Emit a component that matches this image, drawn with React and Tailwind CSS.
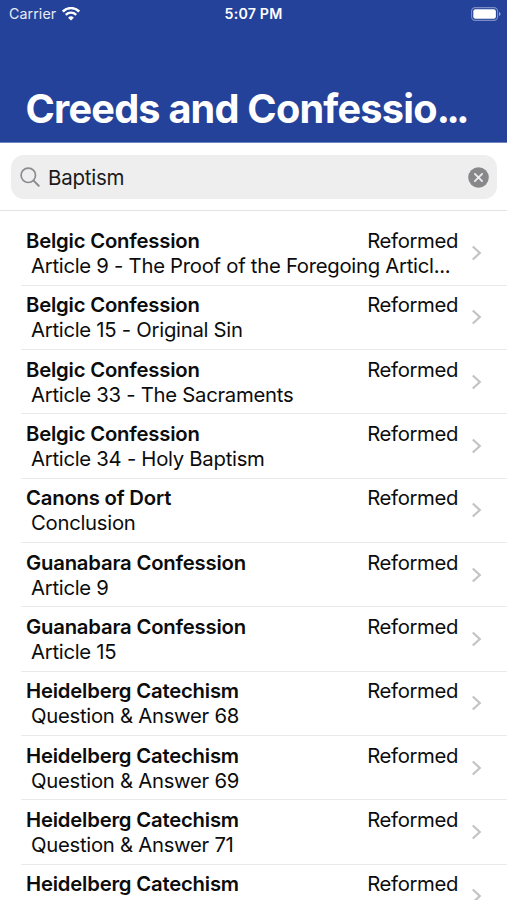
const results = [
  { source: "Belgic Confession", title: "Article 9 - The Proof of the Foregoing Articl..." },
  { source: "Belgic Confession", title: "Article 15 - Original Sin" },
  { source: "Belgic Confession", title: "Article 33 - The Sacraments" },
  { source: "Belgic Confession", title: "Article 34 - Holy Baptism" },
  { source: "Canons of Dort", title: "Conclusion" },
  { source: "Guanabara Confession", title: "Article 9" },
  { source: "Guanabara Confession", title: "Article 15" },
  { source: "Heidelberg Catechism", title: "Question & Answer 68" },
  { source: "Heidelberg Catechism", title: "Question & Answer 69" },
  { source: "Heidelberg Catechism", title: "Question & Answer 71" },
  { source: "Heidelberg Catechism", title: "" },
];

const WifiIcon = () => (
  <svg width="18" height="14" viewBox="0 0 18 14" fill="none" stroke="white">
    <path d="M.8 4.500a11.600 11.600 0 0 1 16.400 0" strokeWidth="2.500" />
    <path d="M3.800 7.800a7.400 7.400 0 0 1 10.400 0" strokeWidth="2.400" />
    <path d="M9 13.600 6.100 10.700a4.100 4.100 0 0 1 5.800 0Z" fill="white" stroke="none" />
  </svg>
);

const BatteryIcon = () => (
  <svg width="30" height="14" viewBox="0 0 30 14" fill="none">
    <rect x="0.6" y="0.6" width="26" height="12.8" rx="3.6" stroke="white" strokeOpacity="0.4" strokeWidth="1.1" />
    <rect x="2.3" y="2.3" width="22.6" height="9.4" rx="2.2" fill="white" />
    <path d="M28 5v4c.9-.3 1.5-1.1 1.5-2S28.900 5.300 28 5Z" fill="white" fillOpacity="0.5" />
  </svg>
);

const StatusBar = () => (
  <div className="grid grid-cols-3 items-center h-[27px] pl-[9px] pr-[6px] text-[14.200px] leading-[27px]">
    <div className="flex items-center gap-[6px]">
      <span className="tracking-[0.1px] text-white/90">Carrier</span>
      <WifiIcon />
    </div>
    <span className="text-center font-semibold whitespace-nowrap tracking-[0.2px] pr-[3px]">5:07 PM</span>
    <div className="flex justify-end">
      <BatteryIcon />
    </div>
  </div>
);

const SearchField = () => (
  <div className="h-[68px] shrink-0 pl-[11px] pr-[10px] pt-[12px] border-b border-[#e3e3e4]">
    <div className="flex items-center h-[44px] rounded-[13px] bg-[#eeeeef] pl-[9px] pr-[8px]">
      <svg width="21" height="21" viewBox="0 0 21 21" fill="none" stroke="#8c8c90" strokeWidth="1.7" strokeLinecap="round">
        <circle cx="8.300" cy="8.300" r="7.200" />
        <path d="m13.600 13.600 5.100 5.100" strokeWidth="2" />
      </svg>
      <span className="flex-1 pl-[7px] pt-[2px] text-[20.500px] tracking-[-0.250px] text-[#1a1a1a]">Baptism</span>
      <svg width="21" height="21" viewBox="0 0 22 22" fill="none">
        <circle cx="11" cy="11" r="10.800" fill="#88888b" />
        <path d="m7.200 7.200 7.600 7.600m0-7.600-7.600 7.600" stroke="#eeeeef" strokeWidth="1.900" strokeLinecap="round" />
      </svg>
    </div>
  </div>
);

const ResultRow = ({ result }) => (
  <li className="ml-[21px] pl-[5px] pr-[25px] h-[64.330px] shrink-0 flex items-center border-b border-[#e9e9ea]">
    <div className="flex-1 min-w-0 text-[20.300px] leading-[25px] h-[50px] whitespace-nowrap">
      <div className="flex justify-between">
        <span className="font-semibold tracking-[-0.200px]">{result.source}</span>
        <span className="tracking-[-0.350px] -mr-px">Reformed</span>
      </div>
      <div className="pl-[5px] tracking-[-0.270px]">{result.title}</div>
    </div>
    <svg className="ml-[14px] shrink-0" width="11" height="16" viewBox="0 0 11 16" fill="none" stroke="#c3c3c6" strokeWidth="2.200">
      <path d="m1.800 1.500 7 6.500-7 6.500" />
    </svg>
  </li>
);

const App = () => {
  return (
    <div className="w-[507px] h-[900px] overflow-hidden flex flex-col bg-white text-[#0c0c0c] font-['Inter','Liberation_Sans',sans-serif]">
      <header className="h-[143px] shrink-0 bg-[#25429b] text-white border-b border-[#6f85c0]">
        <StatusBar />
        <h1 className="mt-[57px] pl-[25.500px] text-[39.700px] leading-[50px] font-bold tracking-[-0.800px] whitespace-nowrap">
          Creeds and Confessio<span className="tracking-[-3.500px]">...</span>
        </h1>
      </header>
      <SearchField />
      <ul className="flex flex-col pt-[10.500px]">
        {results.map((result, index) => (
          <ResultRow key={index} result={result} />
        ))}
      </ul>
    </div>
  );
};

export default App;
